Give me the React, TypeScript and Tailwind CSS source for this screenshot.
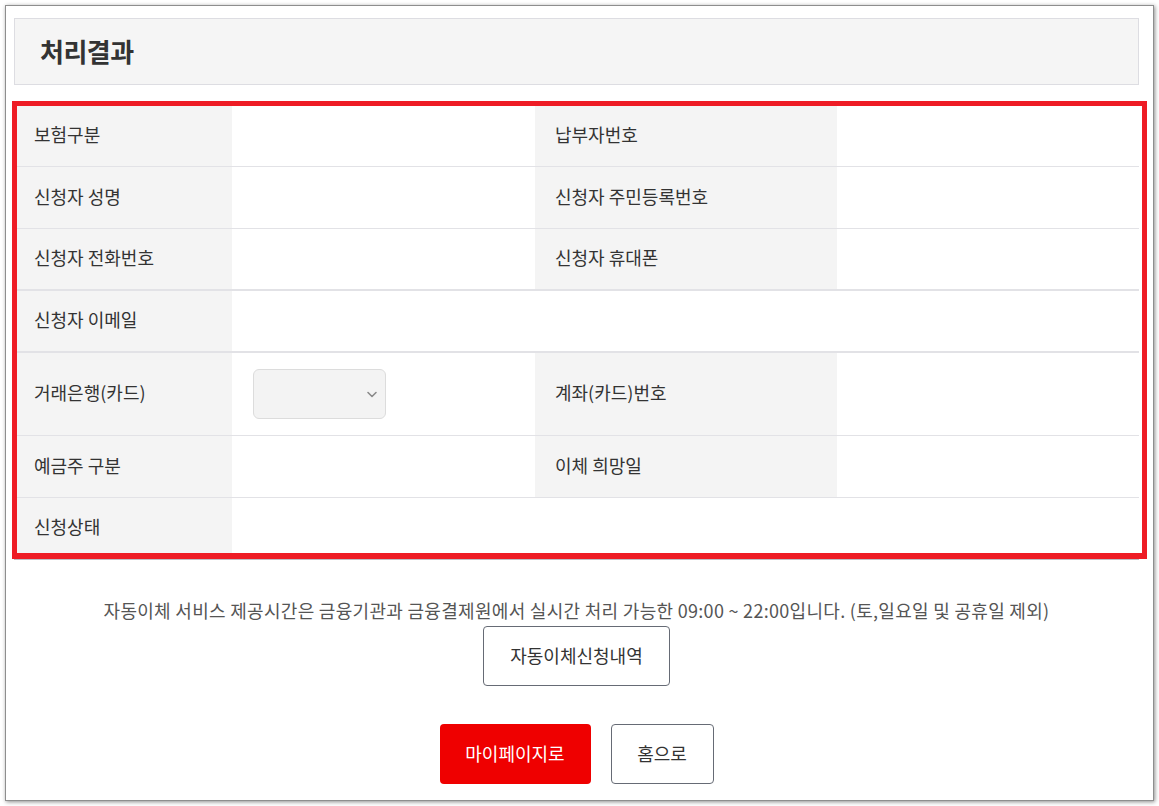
import React from "react";

const font = { fontFamily: '"Noto Sans CJK KR", "Noto Sans", sans-serif' };

function Label({ children, w }: { children?: React.ReactNode; w: string }) {
  return (
    <div className={`${w} h-full bg-[#f4f4f4] flex items-center pl-5 pb-[3px] text-[18px] text-[#333]`}>
      {children}
    </div>
  );
}

function Value({ children, w }: { children?: React.ReactNode; w: string }) {
  return <div className={`${w} h-full bg-white flex items-center`}>{children}</div>;
}

export default function App() {
  return (
    <div className="w-[1159px] h-[806px] bg-white relative overflow-hidden" style={font}>
      <div className="absolute left-[5px] top-[5px] w-[1149px] h-[796px] border border-[#8e8e8e] shadow-[1px_1px_4px_rgba(0,0,0,0.45)] bg-white pl-[8px] pt-[12px]">
        {/* Title */}
        <div className="w-[1125px] h-[67px] border border-[#dddde2] bg-[#f5f5f5] flex items-center pl-[25px] pb-[2px]">
          <h2 className="text-[26px] font-bold text-[#333] tracking-[-0.5px]">처리결과</h2>
        </div>

        {/* Table */}
        <div className="w-[1125px] mt-[18px] border-t-2 border-[#bbb]">
          <div className="flex h-[62px] border-b border-[#e2e2e6]">
            <Label w="w-[218px]">보험구분</Label>
            <Value w="w-[303px]" />
            <Label w="w-[302px]">납부자번호</Label>
            <Value w="w-[302px]" />
          </div>
          <div className="flex h-[62px] border-b border-[#e2e2e6]">
            <Label w="w-[218px]">신청자 성명</Label>
            <Value w="w-[303px]" />
            <Label w="w-[302px]">신청자 주민등록번호</Label>
            <Value w="w-[302px]" />
          </div>
          <div className="flex h-[62px] border-b-2 border-[#e2e2e6]">
            <Label w="w-[218px]">신청자 전화번호</Label>
            <Value w="w-[303px]" />
            <Label w="w-[302px]">신청자 휴대폰</Label>
            <Value w="w-[302px]" />
          </div>
          <div className="flex h-[62px] border-b-2 border-[#e2e2e6]">
            <Label w="w-[218px]">신청자 이메일</Label>
            <Value w="w-[907px]" />
          </div>
          <div className="flex h-[83px] border-b border-[#e2e2e6]">
            <Label w="w-[218px]">거래은행(카드)</Label>
            <Value w="w-[303px]">
              <div className="ml-[21px] w-[133px] h-[50px] rounded-[6px] border border-[#dcdcdc] bg-[#f3f3f3] flex items-center justify-end pr-[5px]">
                <svg width="16" height="16" viewBox="0 0 16 16" fill="none">
                  <path d="M4 6.5 L8 10.5 L12 6.5" stroke="#8a8a8a" strokeWidth="1.6" strokeLinecap="round" strokeLinejoin="round" />
                </svg>
              </div>
            </Value>
            <Label w="w-[302px]">계좌(카드)번호</Label>
            <Value w="w-[302px]" />
          </div>
          <div className="flex h-[62px] border-b border-[#e2e2e6]">
            <Label w="w-[218px]">예금주 구분</Label>
            <Value w="w-[303px]" />
            <Label w="w-[302px]">이체 희망일</Label>
            <Value w="w-[302px]" />
          </div>
          <div className="flex h-[62px] border-b-2 border-[#bdbdc4]">
            <Label w="w-[218px]">신청상태</Label>
            <Value w="w-[907px]" />
          </div>
        </div>

        {/* Notice */}
        <div className="w-[1125px] flex flex-col items-center">
          <p className="mt-[38px] text-[18px] leading-[24px] text-[#555] tracking-[0.3px]">
            자동이체 서비스 제공시간은 금융기관과 금융결제원에서 실시간 처리 가능한 09:00 ~ 22:00입니다. (토,일요일 및 공휴일 제외)
          </p>
          <button className="mt-[4px] w-[187px] h-[60px] rounded-[4px] border border-[#666b75] bg-white text-[18px] text-[#333] pb-[2px]">
            자동이체신청내역
          </button>
          <div className="mt-[38px] flex gap-[20px]">
            <button className="w-[151px] h-[60px] rounded-[4px] bg-[#ef0000] text-white text-[18px] pb-[2px]">
              마이페이지로
            </button>
            <button className="w-[103px] h-[60px] rounded-[4px] border border-[#666b75] bg-white text-[18px] text-[#333] pb-[2px]">
              홈으로
            </button>
          </div>
        </div>
      </div>

      {/* Red annotation box */}
      <div className="absolute left-[12px] top-[101px] w-[1135px] h-[458px] border-[5px] border-b-[6px] border-[#ee1c25] pointer-events-none" />
    </div>
  );
}
